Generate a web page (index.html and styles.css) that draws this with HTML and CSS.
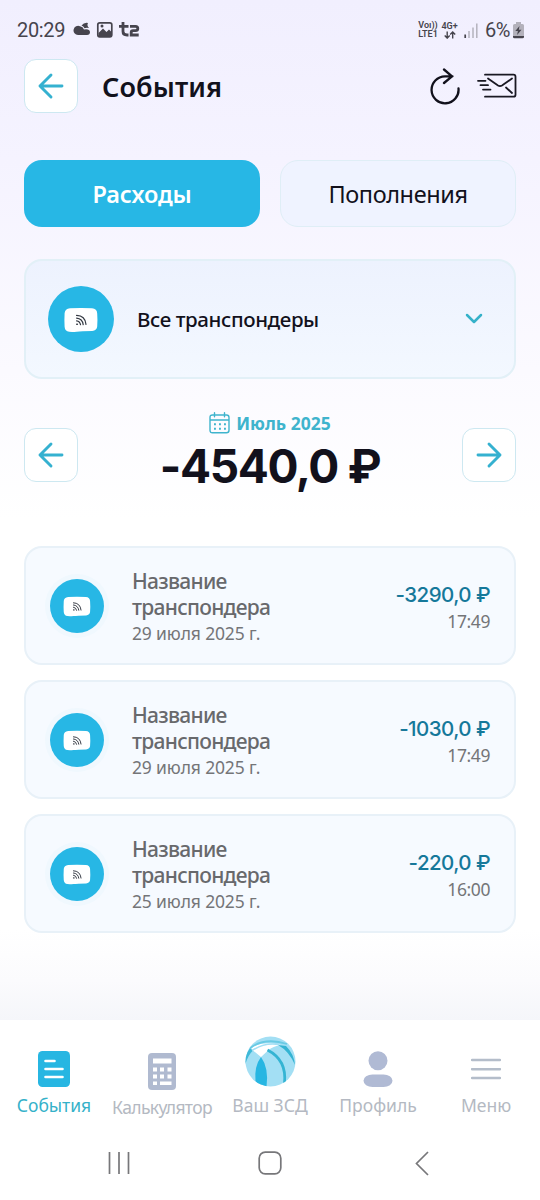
FILE: index.html
```html
<!DOCTYPE html>
<html lang="ru">
<head>
<meta charset="utf-8">
<title>События</title>
<link rel="stylesheet" href="styles.css">
</head>
<body>
<svg class="defs" width="0" height="0" aria-hidden="true">
  <symbol id="back" viewBox="0 0 28 28"><path d="M14 3 3 14l11 11M3 14h22" fill="none" stroke="#35b1d0" stroke-width="2.900" stroke-linecap="round" stroke-linejoin="round"/></symbol>
  <symbol id="tag" viewBox="0 0 34 26"><path d="M6 1.200Q17 .6 28 1.200q5 .3 5.200 5.200.5 6.600 0 13.200-.3 4-5 4.400-11 .2-15.500.7-4.500.4-7.500.1-4.300-.5-4.600-5-.4-6.600 0-13.600Q1 1.700 6 1.200z" fill="#fff"/><g fill="none" stroke="#333842" stroke-width="1.200" stroke-linecap="round"><path d="M12.600 8.400q8.500.2 9.400 9M12.600 11.100q5.800.5 6.600 6.500M12.600 13.800q3.300.4 3.900 3.900"/><path d="M12.800 17.200h.5" stroke-width="1.600"/></g></symbol>
</svg>
<div class="screen">
  <div class="status">
    <span class="clock">20:29</span>
    <svg class="status-left" width="68" height="18" viewBox="0 0 68 18">
      <path d="M5 14a4.600 4.600 0 1 1 2-8.800q3 .3 4 3.300 5.500-1 6 2.500 0 3-3 3z" fill="#46444d"/><path d="M8.500 4.500Q11 1.300 15 2q-1.500 2.500 1 5-2.500-.8-4.500.2Q10.500 5 8.500 4.500z" fill="#46444d"/>
      <rect x="24.800" y="1.800" width="14" height="14" rx="2" fill="none" stroke="#46444d" stroke-width="1.700"/><path d="M25.500 12 30 7.500l3.500 3.500L36 8.500l3 3V16H25.500z" fill="#46444d"/><circle cx="29" cy="5" r="1.500" fill="#46444d"/>
      <path d="M50 1v9.500q0 3.500 4 3.500h1.500M46 5.300h9.500M57 5.300h5.500q2.300 0 2.300 2.200t-2.300 2.200H60q-1.800 0-1.800 1.800V14h7.500" fill="none" stroke="#46444d" stroke-width="2.800"/>
    </svg>
    <span class="net"><span>Voı))</span><span>LTE1</span></span>
    <span class="net gen"><span>4G+</span><svg width="12" height="8" viewBox="0 0 12 8"><path d="M3.200.5v6.500M.7 4.500l2.500 2.600L5.700 4.500M8.700 7.500V1M6.200 3.600 8.700 1l2.500 2.600" fill="none" stroke="#46444d" stroke-width="1.400"/></svg></span>
    <svg class="signal" width="14" height="15" viewBox="0 0 14 15"><path d="M1.200 11.500V15" stroke="#46444d" stroke-width="1.700"/><path d="M5 8v7M9 4.500V15M12.800.5V15" stroke="#b4b2bd" stroke-width="1.500"/></svg>
    <span class="pct">6%</span>
    <svg class="batt" width="11" height="17" viewBox="0 0 11 17"><path d="M3 0h5v2h1.500q1.500 0 1.500 1.500V15H0V3.500Q0 2 1.500 2H3z" fill="#b3b1bb"/><path d="M0 14h11v1q0 1.300-1.500 1.300h-8Q0 16.300 0 15z" fill="#46444d"/><path d="M6.500 4 2.300 9h2.600l-.8 4 4.400-5.200H5.800z" fill="#46444d"/></svg>
  </div>

  <header class="header">
    <button class="square"><svg width="28" height="28"><use href="#back"/></svg></button>
    <h1 class="title">События</h1>
    <svg class="refresh" width="32" height="37" viewBox="0 0 32 37"><path d="M29.500 20.500A13.500 13.500 0 1 1 16 8.300h7.500M15 1.500l8 6.800-8 6.700" fill="none" stroke="#12111c" stroke-width="2.300" stroke-linecap="round" stroke-linejoin="round"/></svg>
    <svg class="mail" width="40" height="26" viewBox="0 0 40 26"><path d="M8 1.700h28.500q2 0 2 2v18q0 2-2 2H8M11 5.500l10 7q2 1.300 4 0l10-7M29 14.500l6 5.500M1 7.800h7.500M3.500 12.200H11M6 16.600h7.500" fill="none" stroke="#191822" stroke-width="1.800" stroke-linecap="round"/></svg>
  </header>

  <div class="tabs">
    <button class="tab active">Расходы</button>
    <button class="tab">Пополнения</button>
  </div>

  <div class="select">
    <span class="disc big"><svg width="34" height="26"><use href="#tag"/></svg></span>
    <span class="select-name">Все транспондеры</span>
    <svg class="chev" width="18" height="11" viewBox="0 0 18 11"><path d="m2 2 7 7 7-7" fill="none" stroke="#35b1c9" stroke-width="2.500" stroke-linecap="round" stroke-linejoin="round"/></svg>
  </div>

  <div class="period">
    <button class="square"><svg width="28" height="28"><use href="#back"/></svg></button>
    <div class="sum">
      <div class="month"><svg width="21" height="22" viewBox="0 0 21 22"><path d="M1 8h19M3.500 3h14Q20 3 20 5.500v12.800q0 2.500-2.500 2.500h-14Q1 20.800 1 18.300V5.500Q1 3 3.500 3zM5.500.7v4M15.500.7v4" fill="none" stroke="#3fb4cd" stroke-width="1.400" stroke-linecap="round"/><path d="M5 12.200h12M5 16.700h12" stroke="#3fb4cd" stroke-width="1.900" stroke-dasharray="1.900 3.100"/></svg><span>Июль 2025</span></div>
      <div class="total">-4540,0 ₽</div>
    </div>
    <button class="square next"><svg width="28" height="28"><use href="#back"/></svg></button>
  </div>

  <div class="list">
    <div class="item">
      <span class="disc"><svg width="28" height="21"><use href="#tag"/></svg></span>
      <div class="info"><div class="name">Название<br>транспондера</div><div class="date">29 июля 2025 г.</div></div>
      <div class="cost"><div class="amount">-3290,0 ₽</div><div class="time">17:49</div></div>
    </div>
    <div class="item">
      <span class="disc"><svg width="28" height="21"><use href="#tag"/></svg></span>
      <div class="info"><div class="name">Название<br>транспондера</div><div class="date">29 июля 2025 г.</div></div>
      <div class="cost"><div class="amount">-1030,0 ₽</div><div class="time">17:49</div></div>
    </div>
    <div class="item">
      <span class="disc"><svg width="28" height="21"><use href="#tag"/></svg></span>
      <div class="info"><div class="name">Название<br>транспондера</div><div class="date">25 июля 2025 г.</div></div>
      <div class="cost"><div class="amount">-220,0 ₽</div><div class="time">16:00</div></div>
    </div>
  </div>

  <nav class="nav">
    <a class="nav-item on"><svg width="32" height="36" viewBox="0 0 32 36"><rect width="32" height="36" rx="4.500" fill="#27b6e2"/><path d="M7.500 10h9M7.500 18h17M7.500 26h17" stroke="#fff" stroke-width="2.600" stroke-linecap="round"/></svg><span>События</span></a>
    <a class="nav-item calc"><svg width="28" height="37" viewBox="0 0 28 37"><rect width="28" height="37" rx="4" fill="#b0bad0"/><path d="M5 5.500h18.500v5H5zM5 14.500h4v4H5zm7 0h4v4h-4zm7.500 0h4v4h-4zM5 21.500h4v4H5zm7 0h4v4h-4zm7.500 0h4v4h-4zM5 28.500h4v3.500H5zm7 0h11.500v3.500H12z" fill="#fff"/></svg><span>Калькулятор</span></a>
    <a class="nav-item home"><svg width="51" height="51" viewBox="0 0 51 51"><defs><clipPath id="ball"><circle cx="25.500" cy="25.500" r="25"/></clipPath></defs><g clip-path="url(#ball)"><path d="M0 0h51v51H0z" fill="#a3dff4"/><path d="M2 18 9 10Q20 5 36 9q-8 1-13 5.500L16 21 8 14.500z" fill="#fff"/><path d="M16 21Q9 30 10.500 46L16 51h5.500Q24 32 16 21z" fill="#27b6e2"/><path d="M0 29Q3 19 8 14.500L5 12 0 20z" fill="#3fb9d8"/><path d="M5 12Q20 1 42 8" fill="none" stroke="#69cae4" stroke-width="1.800"/><path d="M7 14.500Q20 6 34 8.500" fill="none" stroke="#a3dff4" stroke-width="1.500"/><path d="M22.500 14Q42 24 39.500 47" fill="none" stroke="#34b4d3" stroke-width="2.800"/><path d="M33 9l8 1q8 8 9 19Q44 15 33 9z" fill="#34b4d3"/></g></svg><span>Ваш ЗСД</span></a>
    <a class="nav-item"><svg width="30" height="36" viewBox="0 0 30 36"><circle cx="15" cy="9.700" r="9.500" fill="#b0bad4"/><rect x=".5" y="23.500" width="29" height="12.500" rx="9" ry="6.200" fill="#b0bad4"/></svg><span>Профиль</span></a>
    <a class="nav-item"><svg width="30" height="36" viewBox="0 0 30 36"><path d="M1 9h28M1 18.200h28M1 27h28" stroke="#b4bdca" stroke-width="2.500" stroke-linecap="round"/></svg><span>Меню</span></a>
  </nav>
  <div class="system">
    <svg width="22" height="24" viewBox="0 0 22 24"><path d="M1.500 1v22M11 1v22M20.500 1v22" stroke="#77777a" stroke-width="1.700"/></svg>
    <svg width="24" height="24" viewBox="0 0 24 24"><rect x="1.200" y="1.200" width="21.600" height="21.600" rx="6" fill="none" stroke="#77777a" stroke-width="1.700"/></svg>
    <svg width="14" height="25" viewBox="0 0 14 25"><path d="M13 1 1.500 12.500 13 24" fill="none" stroke="#77777a" stroke-width="1.700"/></svg>
  </div>
</div>
</body>
</html>
```
FILE: styles.css
```css
* { box-sizing: border-box; }
body { margin: 0; font-family: "Noto Sans", sans-serif; color: #12111c; }
button { padding: 0; font: inherit; color: inherit; }
svg { display: block; flex: none; }
.defs { position: absolute; }
.screen { width: 540px; height: 1200px; display: flex; flex-direction: column; background: linear-gradient(#f1effe 0, #f5f3ff 160px, #fbfaff 370px, #fff 520px, #fff 930px, #fbfbfd 980px, #f5f6fa 1020px); }

.status { height: 59px; padding: 10px 15px 9px 17px; display: flex; align-items: center; color: #46444d; flex: none; font-family: Roboto, sans-serif; }
.clock { width: 56px; font-size: 20px; letter-spacing: -0.350px; }
.status-left { margin-right: 276px; }
.net { width: 22px; font-size: 9px; line-height: 9px; font-weight: 600; display: flex; flex-direction: column; align-items: center; flex: none; white-space: nowrap; }
.net.gen { width: 21px; }
.signal { margin-left: 4px; }
.pct { width: 28px; margin-left: 7px; font-size: 20px; letter-spacing: -0.500px; flex: none; }

.header { height: 54px; padding: 0 23px 0 24px; display: flex; align-items: center; flex: none; }
.square { width: 54px; height: 54px; border: 1.500px solid #cde8f1; border-radius: 12px; background: #fff; display: grid; place-items: center; flex: none; }
.title { margin: 0; margin-left: 24px; font-size: 27px; font-weight: 600; flex: 1; letter-spacing: 0.100px; }
.mail { margin-left: 16px; }

.tabs { display: grid; grid-template-columns: 236px 236px; gap: 20px; padding: 0 24px; margin-top: 47px; height: 67px; flex: none; }
.tab { border: 1.500px solid #dfeef6; border-radius: 18px; background: #eff3ff; font-size: 23.500px; letter-spacing: -0.400px; }
.tab.active { border: 0; background: #27b7e5; color: #fff; font-weight: 600; letter-spacing: -0.150px; }

.select { margin: 32px 24px 0; height: 120px; padding: 0 31px 0 22px; border: 2px solid #e2f0f7; border-radius: 18px; background: linear-gradient(#edf2fe, #f3f8ff); display: flex; align-items: center; flex: none; }
.disc { width: 54px; height: 54px; padding-top: 2px; border-radius: 50%; background: #27b7e5; display: grid; place-items: center; flex: none; box-shadow: 0 0 0 5px #f0f8fe; }
.disc.big { width: 66px; height: 66px; box-shadow: none; }
.select-name { margin-left: 23px; flex: 1; font-size: 20.500px; font-weight: 500; letter-spacing: -0.400px; }
.chev { margin-bottom: 2px; }

.period { height: 126px; margin-top: 10px; padding: 0 24px; display: flex; align-items: center; flex: none; }
.period .square { margin-top: 6px; }
.next svg { transform: scaleX(-1); }
.sum { flex: 1; display: flex; flex-direction: column; align-items: center; padding-top: 5px; }
.month { display: flex; align-items: center; gap: 6px; color: #3fb4cd; font-size: 17.500px; line-height: 24px; font-weight: 700; }
.total { font-family: Inter, sans-serif; font-size: 46px; line-height: 64px; margin-top: -1px; font-weight: 650; white-space: nowrap; letter-spacing: -1.400px; }

.list { margin-top: 31px; display: flex; flex-direction: column; gap: 15px; padding: 0 24px; }
.item { height: 119px; border: 2px solid #e8f1f8; border-radius: 18px; background: #f6faff; display: flex; align-items: center; padding: 0 24px; flex: none; }
.info { margin-left: 28px; flex: 1; color: #68696c; padding-top: 4px; }
.name { font-size: 21px; line-height: 26px; font-weight: 500; letter-spacing: -0.720px; }
.date { font-size: 17.500px; line-height: 27px; color: #747578; letter-spacing: -0.150px; }
.cost { text-align: right; padding-top: 3px; }
.amount { font-family: Inter, sans-serif; font-size: 20.500px; line-height: 27px; font-weight: 500; color: #15789a; letter-spacing: -0.550px; }
.time { font-size: 17.500px; line-height: 26px; color: #747578; letter-spacing: -0.400px; }

.nav { margin-top: auto; height: 110px; flex: none; background: #fff; display: grid; grid-template-columns: repeat(5, 108px); }
.nav-item { display: flex; flex-direction: column; align-items: center; padding-top: 31px; color: #b4b9c2; font-size: 17.500px; line-height: 26px; white-space: nowrap; gap: 5px; }
.nav-item.on { color: #35b1c9; }
.nav-item.calc { padding-top: 33px; gap: 4px; letter-spacing: -0.650px; }
.nav-item.home { padding-top: 16px; }
.system { height: 70px; flex: none; background: #fff; display: grid; grid-template-columns: 1fr 24px 1fr; align-items: center; padding: 0 108px 4px; }
.system svg:last-child { justify-self: end; margin-right: 3px; }
```
